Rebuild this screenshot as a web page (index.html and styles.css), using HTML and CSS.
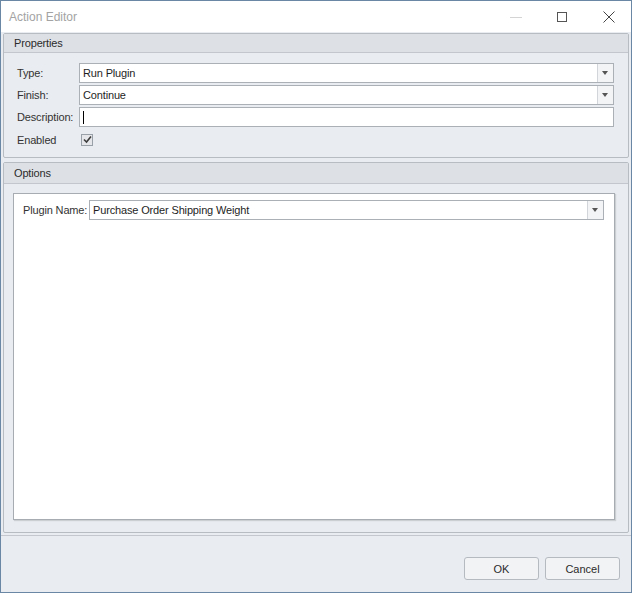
FILE: index.html
```html
<!DOCTYPE html>
<html lang="en">
<head>
    <meta charset="UTF-8">
    <title>Action Editor</title>
    <link rel="stylesheet" href="styles.css">
</head>
<body>
    <div class="window">
        <div class="titlebar">
            <div class="title">Action Editor</div>
            <div class="controls">
                <span class="ctl-min"></span>
                <span class="ctl-max"></span>
                <svg class="ctl-close" width="12" height="12" viewBox="0 0 12 12">
                    <path d="M0.5 0.5 L11.5 11.5 M11.5 0.5 L0.5 11.5" stroke="#444" stroke-width="1" fill="none"/>
                </svg>
            </div>
        </div>

        <div class="content">
            <div class="group">
                <div class="group-header">Properties</div>
                <div class="group-body props">
                    <label class="lbl">Type:</label>
                    <div class="combo"><span class="value">Run Plugin</span><span class="drop"></span></div>
                    <label class="lbl">Finish:</label>
                    <div class="combo"><span class="value">Continue</span><span class="drop"></span></div>
                    <label class="lbl">Description:</label>
                    <div class="combo"><span class="value"><span class="caret"></span></span></div>
                    <label class="lbl">Enabled</label>
                    <div class="check-cell">
                        <span class="checkbox">
                            <svg width="9" height="9" viewBox="0 0 9 9"><path d="M1 4.5 L3.5 7 L8 1.5" stroke="#3c3c3c" stroke-width="1.6" fill="none"/></svg>
                        </span>
                    </div>
                </div>
            </div>

            <div class="group group-fill">
                <div class="group-header">Options</div>
                <div class="group-body">
                    <div class="panel">
                        <div class="panel-row">
                            <label class="lbl">Plugin Name:</label>
                            <div class="combo"><span class="value">Purchase Order Shipping Weight</span><span class="drop"></span></div>
                        </div>
                    </div>
                </div>
            </div>
        </div>

        <div class="footer">
            <button class="btn">OK</button>
            <button class="btn">Cancel</button>
        </div>
    </div>
</body>
</html>
```

FILE: styles.css
```css
* {
    box-sizing: border-box;
}

body {
    margin: 0;
    font-family: 'Liberation Sans', Arial, sans-serif;
    font-size: 11px;
    letter-spacing: -0.15px;
    color: #2b2b2b;
    background: #ffffff;
}

.window {
    width: 632px;
    height: 593px;
    border: 1px solid #6a88a6;
    display: flex;
    flex-direction: column;
    background-color: #e9ecf0;
}

/* title bar */
.titlebar {
    height: 31px;
    background: #ffffff;
    display: flex;
    align-items: center;
    justify-content: space-between;
    flex-shrink: 0;
}

.title {
    margin-left: 8px;
    font-size: 12px;
    letter-spacing: 0;
    color: #a3a3a3;
}

.controls {
    display: flex;
    align-items: center;
    margin-right: 16px;
}

.ctl-min {
    width: 12px;
    height: 1px;
    background: #d4d4d4;
    margin-right: 35px;
    margin-top: 1px;
}

.ctl-max {
    width: 10px;
    height: 10px;
    border: 1px solid #555;
    margin-right: 36px;
}

/* groups */
.content {
    flex: 1;
    display: flex;
    flex-direction: column;
    padding: 1px 2px 0 2px;
    gap: 4px;
}

.group {
    border: 1px solid #b7bcc3;
    border-radius: 2px;
    background: #e9ecf0;
}

.group-fill {
    flex: 1;
    display: flex;
    flex-direction: column;
}

.group-header {
    height: 19px;
    background: #dde1e6;
    border-bottom: 1px solid #c3c7cd;
    padding-left: 10px;
    line-height: 18px;
    color: #2b2b2b;
}

.group-fill .group-header {
    height: 21px;
    line-height: 20px;
}

.group-body {
    padding: 10px 14px 7px 13px;
}

.group-fill .group-body {
    flex: 1;
    display: flex;
    padding: 9px 13px 12px 9px;
}

.props {
    display: grid;
    grid-template-columns: 62px 1fr;
    row-gap: 2px;
    align-items: center;
}

.lbl {
    color: #333;
    white-space: nowrap;
}

/* editors */
.combo {
    height: 20px;
    border: 1px solid #abb0b7;
    background: #ffffff;
    display: flex;
    align-items: stretch;
}

.value {
    flex: 1;
    padding-left: 3px;
    line-height: 18px;
    color: #1e1e1e;
    display: flex;
    align-items: center;
}

.caret {
    width: 1px;
    height: 13px;
    background: #000;
}

.drop {
    width: 16px;
    border-left: 1px solid #d2d5da;
    background: #f3f4f6;
    position: relative;
}

.drop::after {
    content: "";
    position: absolute;
    left: 4px;
    top: 7px;
    border-left: 3.5px solid transparent;
    border-right: 3.5px solid transparent;
    border-top: 4px solid #555;
}

.check-cell {
    height: 21px;
    display: flex;
    align-items: center;
    padding-left: 2px;
}

.checkbox {
    width: 12px;
    height: 12px;
    border: 1px solid #9aa0a7;
    background: #e4e6e9;
    display: flex;
    align-items: center;
    justify-content: center;
}

.panel {
    flex: 1;
    background: #ffffff;
    border: 1px solid #a7acb3;
    box-shadow: 1px 1px 1px rgba(0, 0, 0, 0.12);
    padding: 6px 10px 0 9px;
}

.panel-row {
    display: flex;
    align-items: center;
}

.panel-row .lbl {
    width: 66px;
}

.panel-row .combo {
    flex: 1;
}

/* footer */
.footer {
    height: 57px;
    flex-shrink: 0;
    border-top: 1px solid #c4c8ce;
    margin-top: 2px;
    display: flex;
    justify-content: flex-end;
    align-items: flex-start;
    gap: 6px;
    padding: 21px 11px 0 0;
}

.btn {
    width: 75px;
    height: 23px;
    border: 1px solid #b5bac1;
    border-radius: 3px;
    background: #f2f3f5;
    font-family: 'Liberation Sans', Arial, sans-serif;
    font-size: 11px;
    color: #2b2b2b;
}
```
